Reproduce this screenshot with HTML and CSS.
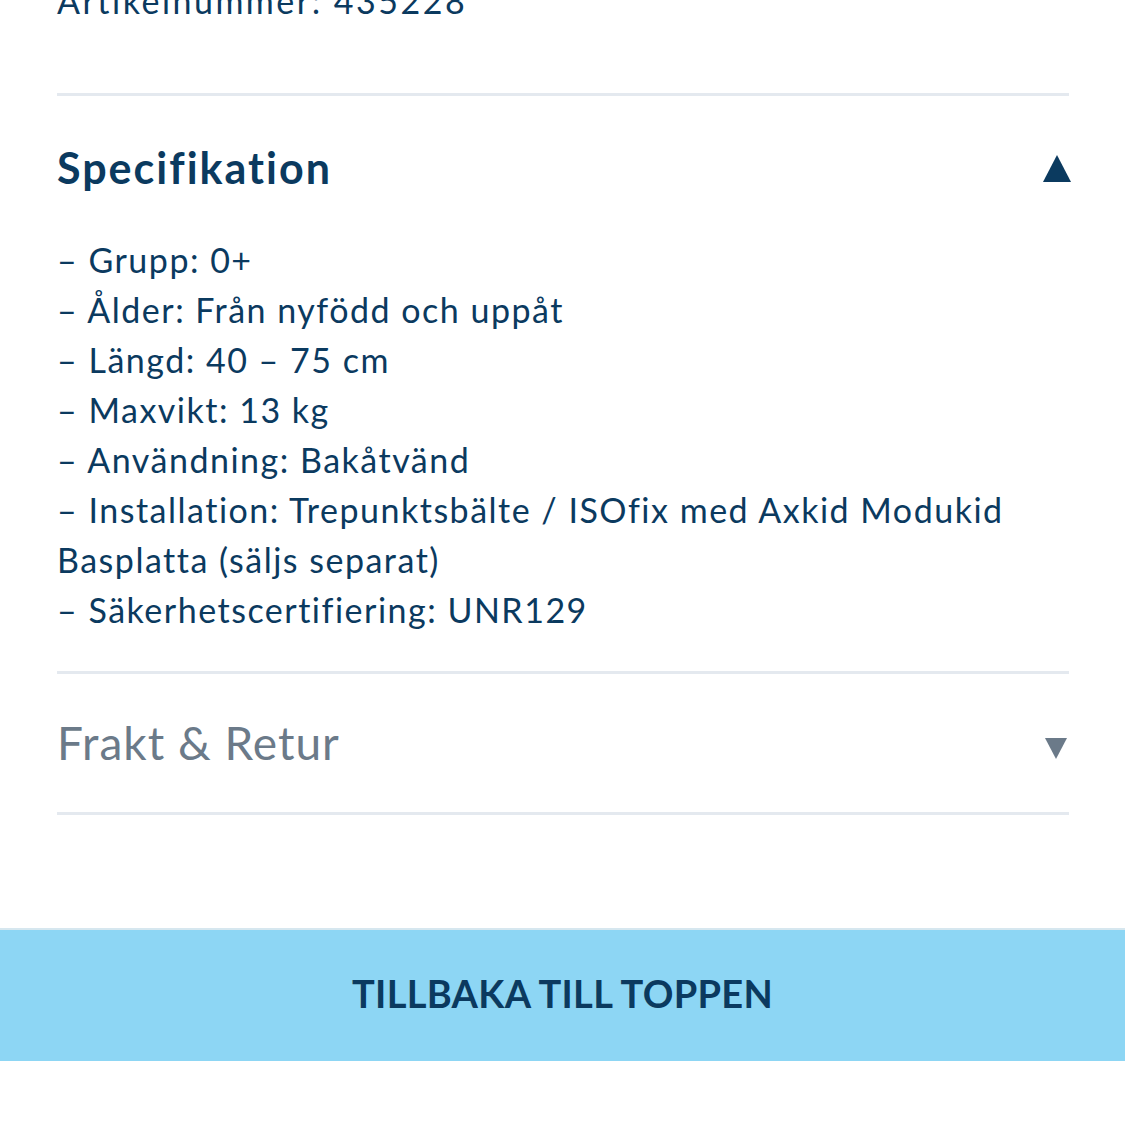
FILE: index.html
```html
<!doctype html>
<html lang="sv">
<head>
    <meta charset="UTF-8">
    <meta name="viewport" content="width=device-width, initial-scale=1.0">
    <title>Produkt - Specifikation</title>
    <link rel="stylesheet" href="styles.css">
</head>
<body>
    <div class="product-info">
        <p class="article-no">Artikelnummer: 435228</p>

        <section class="accordion open">
            <div class="accordion-head">
                <h2>Specifikation</h2>
                <span class="arrow up"></span>
            </div>
            <div class="accordion-body">
                <div>– Grupp: 0+</div>
                <div>– Ålder: Från nyfödd och uppåt</div>
                <div>– Längd: 40 – 75 cm</div>
                <div>– Maxvikt: 13 kg</div>
                <div>– Användning: Bakåtvänd</div>
                <div>– Installation: Trepunktsbälte / ISOfix med Axkid Modukid Basplatta (säljs separat)</div>
                <div>– Säkerhetscertifiering: UNR129</div>
            </div>
        </section>

        <section class="accordion">
            <div class="accordion-head">
                <h2>Frakt &amp; Retur</h2>
                <span class="arrow down"></span>
            </div>
        </section>
    </div>

    <a class="back-to-top" href="#">TILLBAKA TILL TOPPEN</a>
</body>
</html>
```

FILE: styles.css
```css
body {
    margin: 0;
    font-family: Lato, "Open Sans", sans-serif;
    color: #0b3a5f;
    background: #fff;
}

.product-info {
    padding: 0 56px 0 57px;
}

.article-no {
    margin: -24px 0 0;
    font-size: 34px;
    line-height: 50px;
    padding-bottom: 67px;
    letter-spacing: 2.5px;
}

.accordion {
    border-top: 3px solid #e4e9ef;
}

.accordion:last-child {
    border-bottom: 3px solid #e4e9ef;
}

.accordion-head {
    display: flex;
    justify-content: space-between;
    align-items: center;
    height: 138px;
}

.accordion.open .accordion-head {
    height: auto;
    padding: 47px 0 42px;
}

.accordion-head h2 {
    margin: 0;
    font-size: 43px;
    line-height: 50px;
    font-weight: 700;
    letter-spacing: 2px;
}

.accordion:not(.open) h2 {
    font-size: 46px;
    font-weight: 400;
    letter-spacing: 1px;
    color: #6b7a89;
}

.arrow {
    width: 0;
    height: 0;
    border-left: 14px solid transparent;
    border-right: 14px solid transparent;
}

.arrow.up {
    border-bottom: 27px solid #0b3a5f;
    margin-right: -2px;
}

.arrow.down {
    border-left-width: 11px;
    border-right-width: 11px;
    border-top: 21px solid #6b7a89;
    margin: 10px 2px 0 0;
}

.accordion-body {
    font-size: 34px;
    line-height: 50px;
    letter-spacing: 1.5px;
    padding-bottom: 36px;
}

.back-to-top {
    display: block;
    margin-top: 113px;
    height: 131px;
    line-height: 126px;
    text-align: center;
    background: #8dd6f4;
    border-top: 2px solid #d6e7ef;
    color: #0b3a5f;
    font-size: 38px;
    font-weight: 700;
    letter-spacing: 0.3px;
    text-decoration: none;
}
```
